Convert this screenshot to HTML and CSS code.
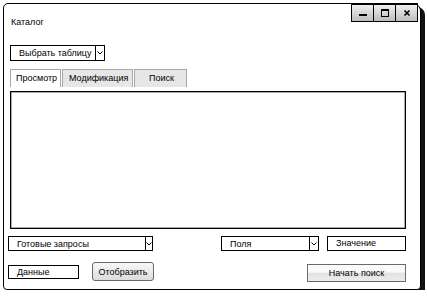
FILE: index.html
```html
<!DOCTYPE html>
<html lang="ru">
<head>
    <meta charset="UTF-8">
    <title>Каталог</title>
    <link rel="stylesheet" href="styles.css">
</head>
<body>
    <div class="window">
        <div class="titlebar">
            <span class="title">Каталог</span>
            <div class="controls">
                <span class="ctl"><svg width="10" height="10" viewBox="0 0 10 10"><rect x="1" y="6" width="8" height="2" fill="#000"/></svg></span>
                <span class="ctl"><svg width="10" height="10" viewBox="0 0 10 10"><rect x="1.5" y="1.5" width="7" height="7" fill="none" stroke="#000" stroke-width="1"/><rect x="1" y="1" width="8" height="2" fill="#000"/></svg></span>
                <span class="ctl"><svg width="10" height="10" viewBox="0 0 10 10"><path d="M2.5 2.5 L7.5 7.5 M7.5 2.5 L2.5 7.5" stroke="#000" stroke-width="1.6"/></svg></span>
            </div>
        </div>

        <div class="combo combo-table">
            <span class="combo-text">Выбрать таблицу</span>
            <span class="combo-arrow"><svg width="6" height="4" viewBox="0 0 6 4"><path d="M0.5 0.5 L3 3 L5.5 0.5" fill="none" stroke="#000" stroke-width="1"/></svg></span>
        </div>

        <div class="tabs">
            <span class="tab active">Просмотр</span>
            <span class="tab">Модификация</span>
            <span class="tab tab-search">Поиск</span>
        </div>

        <div class="panel"></div>

        <div class="row row-query">
            <div class="combo combo-query">
                <span class="combo-text">Готовые запросы</span>
                <span class="combo-arrow"><svg width="6" height="4" viewBox="0 0 6 4"><path d="M0.5 0.5 L3 3 L5.5 0.5" fill="none" stroke="#000" stroke-width="1"/></svg></span>
            </div>
            <div class="combo combo-fields">
                <span class="combo-text">Поля</span>
                <span class="combo-arrow"><svg width="6" height="4" viewBox="0 0 6 4"><path d="M0.5 0.5 L3 3 L5.5 0.5" fill="none" stroke="#000" stroke-width="1"/></svg></span>
            </div>
            <div class="field field-value">Значение</div>
        </div>

        <div class="row row-actions">
            <div class="field field-data">Данные</div>
            <button class="btn btn-show">Отобразить</button>
            <button class="btn btn-search">Начать поиск</button>
        </div>
    </div>
</body>
</html>
```

FILE: styles.css
```css
body {
    margin: 0;
    padding: 3px 0 0 3px;
    background: #fff;
    font-family: 'Liberation Sans', Arial, sans-serif;
    font-size: 9px;
    color: #000;
}
.window {
    width: 418px;
    height: 287px;
    box-sizing: border-box;
    border: 1px solid #000;
    border-radius: 5px 8px 4px 4px;
    box-shadow: 4px 4px 0 #111;
    background: #fff;
    display: flex;
    flex-direction: column;
    padding: 0 14px 0 6px;
}
.titlebar {
    display: flex;
    justify-content: space-between;
    align-items: flex-start;
    height: 41px;
}
.title {
    margin-top: 13px;
    margin-left: 1px;
    line-height: 11px;
}
.controls {
    display: flex;
    margin-top: -1px;
    margin-right: -12px;
    border: 1px solid #000;
    border-top-width: 2px;
}
.ctl {
    width: 21px;
    height: 16px;
    display: flex;
    align-items: center;
    justify-content: center;
    background: linear-gradient(#f0f0f0, #bdbdbd);
    border-left: 1px solid #000;
}
.ctl:first-child { border-left: none; }

.combo {
    display: flex;
    border: 1px solid #000;
    box-sizing: border-box;
    background: #fff;
}
.combo-text {
    flex: 1;
    padding-left: 8px;
    line-height: 14px;
}
.combo-arrow {
    width: 8px;
    border-left: 1px solid #000;
    display: flex;
    align-items: center;
    justify-content: center;
}
.combo-table {
    width: 95px;
    height: 16px;
}

.tabs {
    display: flex;
    gap: 1px;
    margin-top: 8px;
    height: 18px;
}
.tab {
    box-sizing: border-box;
    border: 1px solid #a8a8a8;
    border-bottom: none;
    background: #e6e6e6;
    line-height: 17px;
    padding-left: 7px;
}
.tab.active {
    width: 51px;
    background: #fff;
    padding-left: 5px;
}
.tab:nth-child(2) { width: 71px; padding-left: 6px; }
.tab-search { width: 53px; padding-left: 14px; }

.panel {
    margin-top: 4px;
    height: 138px;
    border: 1px solid #000;
    box-shadow: inset 0 0 0 0.5px #555;
    box-sizing: border-box;
}

.row {
    display: flex;
    align-items: center;
    margin-left: -2px;
}
.row-query {
    margin-top: 7px;
    height: 15px;
}
.row-query .combo { height: 15px; }
.combo-query { width: 145px; }
.combo-query .combo-arrow { width: 6px; }
.combo-fields { width: 98px; margin-left: 68px; }
.field {
    box-sizing: border-box;
    border: 1px solid #000;
    padding-left: 8px;
    line-height: 12px;
}
.field-value {
    width: 79px;
    height: 15px;
    margin-left: 8px;
    line-height: 13px;
}
.row-actions {
    margin-top: 11px;
    height: 19px;
}
.field-data {
    width: 71px;
    height: 14px;
    margin-top: 1px;
}
.btn {
    font-family: inherit;
    font-size: 9px;
    color: #000;
    box-sizing: border-box;
    padding: 0;
    cursor: pointer;
}
.btn-show {
    width: 62px;
    height: 19px;
    margin-left: 13px;
    border: 1px solid #6a6a6a;
    border-radius: 3px;
    background: linear-gradient(#f8f8f8, #dcdcdc);
}
.btn-search {
    width: 99px;
    height: 18px;
    margin-left: auto;
    margin-top: 2px;
    border: 1px solid #6a6a6a;
    border-radius: 0;
    background: linear-gradient(#fafafa 45%, #e2e2e2 50%, #ececec);
}
```
